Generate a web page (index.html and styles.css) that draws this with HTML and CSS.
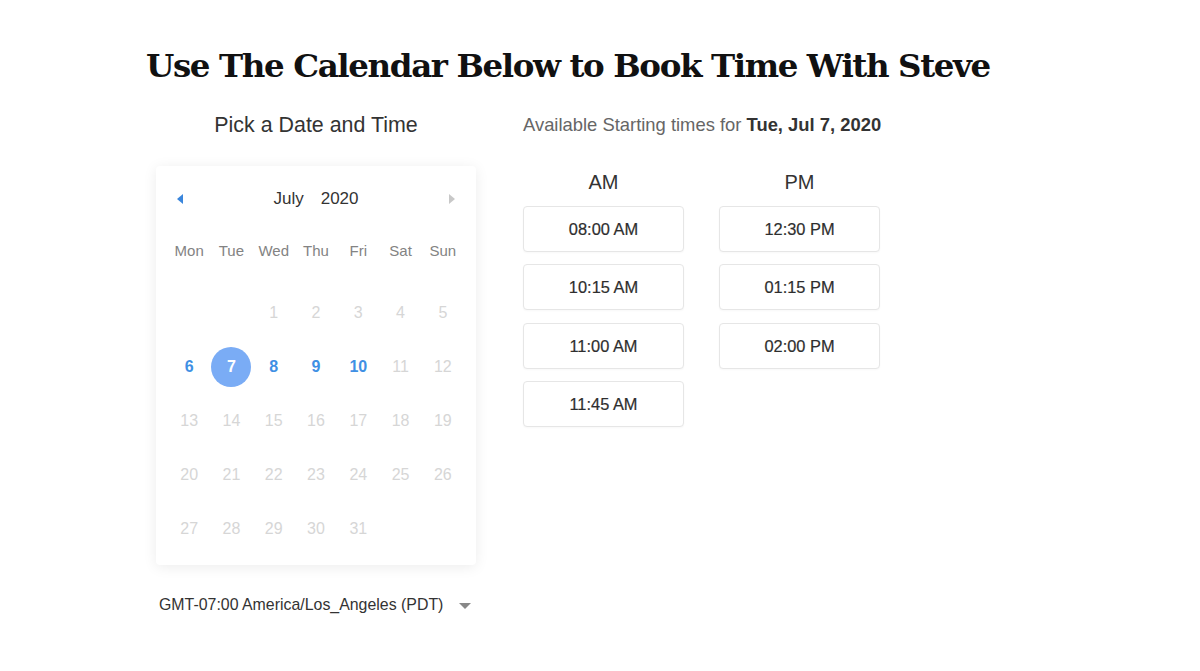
FILE: index.html
```html
<!DOCTYPE html>
<html lang="en">
<head>
<meta charset="utf-8">
<title>Book Time With Steve</title>
<link rel="stylesheet" href="styles.css">
</head>
<body>
<div class="page">
  <h1 class="title">Use The Calendar Below to Book Time With Steve</h1>
  <div class="content">
    <section class="left">
      <h2 class="heading">Pick a Date and Time</h2>
      <div class="card">
        <div class="cal-head">
          <span class="arrow arrow-prev"></span>
          <div class="month"><span>July</span><span>2020</span></div>
          <span class="arrow arrow-next"></span>
        </div>
        <div class="weekdays">
          <span>Mon</span><span>Tue</span><span>Wed</span><span>Thu</span><span>Fri</span><span>Sat</span><span>Sun</span>
        </div>
        <div class="days">
          <span></span><span></span>
          <span class="off">1</span><span class="off">2</span><span class="off">3</span><span class="off">4</span><span class="off">5</span>
          <span class="on">6</span><span class="on sel">7</span><span class="on">8</span><span class="on">9</span><span class="on">10</span><span class="off">11</span><span class="off">12</span>
          <span class="off">13</span><span class="off">14</span><span class="off">15</span><span class="off">16</span><span class="off">17</span><span class="off">18</span><span class="off">19</span>
          <span class="off">20</span><span class="off">21</span><span class="off">22</span><span class="off">23</span><span class="off">24</span><span class="off">25</span><span class="off">26</span>
          <span class="off">27</span><span class="off">28</span><span class="off">29</span><span class="off">30</span><span class="off">31</span>
        </div>
      </div>
      <div class="tz">
        <span>GMT-07:00 America/Los_Angeles (PDT)</span>
        <span class="caret"></span>
      </div>
    </section>
    <section class="right">
      <h2 class="heading avail">Available Starting times for <strong>Tue, Jul 7, 2020</strong></h2>
      <div class="slots">
        <div class="col">
          <div class="col-label">AM</div>
          <button class="slot">08:00 AM</button>
          <button class="slot">10:15 AM</button>
          <button class="slot">11:00 AM</button>
          <button class="slot">11:45 AM</button>
        </div>
        <div class="col">
          <div class="col-label">PM</div>
          <button class="slot">12:30 PM</button>
          <button class="slot">01:15 PM</button>
          <button class="slot">02:00 PM</button>
        </div>
      </div>
    </section>
  </div>
</div>
</body>
</html>
```

FILE: styles.css
```css
* { box-sizing: border-box; }
html, body { margin: 0; padding: 0; background: #fff; }
body { font-family: "Liberation Sans", Arial, sans-serif; color: #333; }

.page { padding: 46px 0 0 146px; }

.title {
  margin: 0;
  font-family: "DejaVu Serif", "Liberation Serif", serif;
  font-weight: bold;
  font-size: 32.5px;
  line-height: 40px;
  color: #111;
  letter-spacing: -1.4px;
  white-space: nowrap;
}

.content { display: flex; gap: 47px; margin: 27px 0 0 10px; }

.heading {
  margin: 0;
  font-size: 21.4px;
  line-height: 24px;
  font-weight: normal;
  color: #333;
  white-space: nowrap;
}

.left { width: 320px; }
.left .heading { text-align: center; }

.card {
  margin-top: 29px;
  background: #fff;
  border-radius: 4px;
  box-shadow: 0 2px 14px rgba(0, 0, 0, 0.08);
  padding: 1px 12px 9px;
}

.cal-head {
  height: 64px;
  display: flex;
  align-items: center;
  justify-content: space-between;
  padding: 0 9px;
}
.month { display: flex; gap: 17px; font-size: 17px; color: #333; }
.arrow { width: 0; height: 0; border-top: 5px solid transparent; border-bottom: 5px solid transparent; }
.arrow-prev { border-right: 6px solid #3a86dc; }
.arrow-next { border-left: 6px solid #c8c8c8; }

.weekdays, .days { display: grid; grid-template-columns: repeat(7, 1fr); text-align: center; }
.weekdays { height: 38px; align-items: center; font-size: 15px; color: #838383; margin-bottom: 17px; }

.days { grid-auto-rows: 54px; align-items: center; justify-items: center; font-size: 16px; }
.days span { display: flex; align-items: center; justify-content: center; width: 40px; height: 40px; }
.days .off { color: #d6d6d6; }
.days .on { color: #3f90e4; font-weight: bold; }
.days .sel { background: #7aacf5; border-radius: 50%; color: #fff; }

.tz {
  margin-top: 31px;
  display: flex;
  align-items: center;
  gap: 16px;
  padding-left: 3px;
  font-size: 15.9px;
  color: #333;
  line-height: 18px;
}
.caret { width: 0; height: 0; border-left: 6px solid transparent; border-right: 6px solid transparent; border-top: 6px solid #888; margin-top: 2px; }

.avail { font-size: 18.4px; color: #666; }
.avail strong { color: #333; }

.slots { display: flex; gap: 35px; margin-top: 33px; }
.col { width: 161px; display: flex; flex-direction: column; gap: 12.4px; }
.col-label { text-align: center; font-size: 20px; line-height: 24px; color: #333; margin-bottom: -0.4px; }
.slot {
  height: 46px;
  background: #fff;
  border: 1px solid #e6e6e6;
  border-radius: 4px;
  font-family: "Liberation Sans", Arial, sans-serif;
  font-size: 16.4px;
  color: #2e2e2e;
  box-shadow: 0 1px 2px rgba(0, 0, 0, 0.03);
  padding: 1px 0 0;
  -webkit-text-stroke: 0.2px #2e2e2e;
}
```
